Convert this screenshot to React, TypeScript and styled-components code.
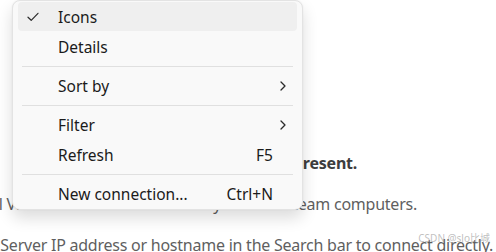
import React from 'react';
import styled, { createGlobalStyle } from 'styled-components';

const GlobalStyle = createGlobalStyle`
  html, body {
    margin: 0;
    padding: 0;
    background: #ffffff;
  }
  body {
    font-family: 'Noto Sans', 'Liberation Sans', sans-serif;
  }
`;

const Page = styled.div`
  position: relative;
  width: 496px;
  height: 252px;
  overflow: hidden;
  background: #ffffff;
`;

const Content = styled.div`
  display: flex;
  flex-direction: column;
  padding-top: 152px;
  gap: 19px;
`;

const Line = styled.div<{ $end: number; $bold?: boolean }>`
  width: ${(p) => p.$end}px;
  display: flex;
  justify-content: flex-end;
  overflow: hidden;
  white-space: nowrap;
  font-size: 16px;
  letter-spacing: -0.24px;
  line-height: 22px;
  font-weight: ${(p) => (p.$bold ? 700 : 400)};
  color: ${(p) => (p.$bold ? '#3d3d3d' : '#5f5f5f')};
`;

const Watermark = styled.span`
  position: absolute;
  right: 6px;
  bottom: 7px;
  font-size: 10px;
  color: rgba(150, 150, 150, 0.6);
  font-family: 'Noto Sans', 'Noto Sans CJK SC', sans-serif;
`;

const Menu = styled.div`
  position: absolute;
  top: 0;
  left: 12px;
  width: 289px;
  display: flex;
  flex-direction: column;
  padding: 1px 0 0;
  background: #f9f9f9;
  border: 1px solid #e3e3e3;
  border-radius: 8px;
  box-shadow: 0 8px 16px rgba(0, 0, 0, 0.14), 0 0 2px rgba(0, 0, 0, 0.06);
  font-family: 'Noto Sans', 'Liberation Sans', sans-serif;
  font-size: 15.5px;
  color: #1b1b1b;
`;

const Item = styled.div<{ $active?: boolean }>`
  position: relative;
  display: flex;
  align-items: center;
  flex: 0 0 29px;
  margin: 0 5px 1px;
  padding-left: 40px;
  border-radius: 4px;
  background: ${(p) => (p.$active ? '#efefef' : 'transparent')};
`;

const Label = styled.span`
  flex: 1;
`;

const Shortcut = styled.span`
  margin-right: 24px;
`;

const SubArrow = styled.span`
  display: flex;
  width: 24px;
  justify-content: flex-start;
  padding-left: 7px;
  box-sizing: border-box;
`;

const CheckSlot = styled.span`
  position: absolute;
  left: 9px;
  top: 10px;
  display: flex;
`;

const Separator = styled.div`
  flex: 0 0 9px;
  display: flex;
  align-items: center;
  padding: 0 9px;

  &::after {
    content: '';
    flex: 1;
    height: 1px;
    background: #e0e0e0;
  }
`;

const Check = () => (
  <svg width="12" height="10" viewBox="0 0 12 10" fill="none">
    <path d="M1 5.2 L4.2 8.3 L11 1.3" stroke="#2b2b2b" strokeWidth="1.2" strokeLinecap="round" strokeLinejoin="round" />
  </svg>
);

const Chevron = () => (
  <svg width="6" height="10" viewBox="0 0 6 10" fill="none">
    <path d="M1 1 L5 5 L1 9" stroke="#2b2b2b" strokeWidth="1.3" strokeLinecap="round" strokeLinejoin="round" />
  </svg>
);

interface MenuEntry {
  label: string;
  checked?: boolean;
  active?: boolean;
  shortcut?: string;
  submenu?: boolean;
  separatorBefore?: boolean;
}

const entries: MenuEntry[] = [
  { label: 'Icons', checked: true, active: true },
  { label: 'Details' },
  { label: 'Sort by', submenu: true, separatorBefore: true },
  { label: 'Filter', submenu: true, separatorBefore: true },
  { label: 'Refresh', shortcut: 'F5' },
  { label: 'New connection...', shortcut: 'Ctrl+N', separatorBefore: true },
];

export default function App() {
  return (
    <Page>
      <GlobalStyle />
      <Content>
        <Line $end={357} $bold>
          No computers or contacts are present.
        </Line>
        <Line $end={417}>Tunnel View lists hosts linked directly to all the team computers.</Line>
        <Line $end={493}>Server IP address or hostname in the Search bar to connect directly.</Line>
      </Content>
      <Watermark>CSDN @slo比城</Watermark>
      <Menu>
        {entries.map((e) => (
          <React.Fragment key={e.label}>
            {e.separatorBefore && <Separator />}
            <Item $active={e.active}>
              {e.checked && (
                <CheckSlot>
                  <Check />
                </CheckSlot>
              )}
              <Label>{e.label}</Label>
              {e.shortcut && <Shortcut>{e.shortcut}</Shortcut>}
              {e.submenu && (
                <SubArrow>
                  <Chevron />
                </SubArrow>
              )}
            </Item>
          </React.Fragment>
        ))}
      </Menu>
    </Page>
  );
}
